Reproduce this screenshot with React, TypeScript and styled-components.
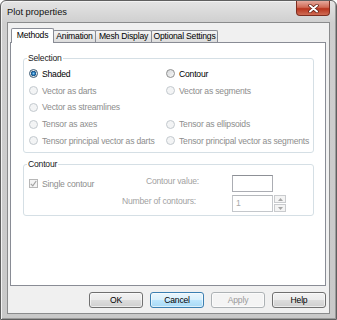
import styled, { createGlobalStyle } from 'styled-components';

const GlobalStyle = createGlobalStyle`
  html, body {
    margin: 0;
    padding: 0;
    background: #ffffff;
  }
  body {
    font-family: "Liberation Sans", Arial, sans-serif;
    font-size: 8.6px;
    letter-spacing: -0.2px;
  }
  * {
    box-sizing: border-box;
  }
`;

const Window = styled.div`
  width: 337px;
  height: 320px;
  display: flex;
  flex-direction: column;
  border: 1px solid #5f5f5f;
  border-radius: 6px 6px 0 0;
  background: linear-gradient(#e4e4e4, #cfcfcf 22px, #c9c9c9);
  box-shadow: inset 1px 1px 0 #f2f2f2, inset -1px -1px 0 #9a9a9a;
`;

const TitleBar = styled.div`
  height: 21px;
  display: flex;
  justify-content: space-between;
  align-items: center;
  padding: 0 6px 0 6px;
`;

const Title = styled.span`
  font-size: 9.3px;
  letter-spacing: 0;
  color: #111;
`;

const CloseButton = styled.div`
  align-self: flex-start;
  width: 34px;
  height: 15px;
  border: 1px solid #7d2d1f;
  border-top: none;
  border-radius: 0 0 4px 4px;
  background: linear-gradient(#e6a99d, #d06a55 45%, #b8341d 55%, #cf6d55);
  display: flex;
  align-items: center;
  justify-content: center;
`;

const Client = styled.div`
  flex: 1;
  margin: 0 6px 5px 6px;
  border: 1px solid #8a8b8c;
  background: #f0f0f0;
  padding: 5px 3px 5px 2px;
  display: flex;
  flex-direction: column;
`;

const TabStrip = styled.div`
  height: 14px;
  display: flex;
  align-items: flex-end;
  padding-left: 1px;
`;

const Tab = styled.div<{ $active?: boolean; $w: number }>`
  position: relative;
  z-index: ${p => (p.$active ? 2 : 1)};
  width: ${p => p.$w}px;
  height: ${p => (p.$active ? 15 : 12)}px;
  margin-bottom: ${p => (p.$active ? -1 : 0)}px;
  margin-left: -1px;
  border: 1px solid #898c95;
  border-bottom: none;
  border-radius: 2px 2px 0 0;
  background: ${p => (p.$active ? '#ffffff' : 'linear-gradient(#f4f4f4, #e9e9e9 50%, #dcdcdc)')};
  color: #000;
  display: flex;
  align-items: ${p => (p.$active ? 'flex-start' : 'center')};
  padding-top: ${p => (p.$active ? 1 : 0)}px;
  justify-content: center;
  line-height: 11px;
  white-space: nowrap;

  &:first-child {
    margin-left: 0;
  }
`;

const Panel = styled.div`
  flex: 1;
  background: #ffffff;
  border: 1px solid #898c95;
  padding: 9px 11px 0 12px;
`;

const Group = styled.fieldset<{ $mt?: number; $pr?: number }>`
  margin: ${p => p.$mt ?? 0}px 0 0 0;
  min-width: 0;
  border: 1px solid #d5dfe5;
  border-radius: 3px;
  padding: 1.5px ${p => p.$pr ?? 5}px 3px 5px;
`;

const Legend = styled.legend`
  padding: 0 1px;
  margin-left: -2px;
  line-height: 12px;
  color: #1a1a1a;
`;

const OptionGrid = styled.div`
  display: grid;
  grid-template-columns: 137px 1fr;
  grid-auto-rows: 16.75px;
`;

const Option = styled.label<{ $disabled?: boolean }>`
  display: flex;
  align-items: center;
  gap: 4px;
  white-space: nowrap;
  color: ${p => (p.$disabled ? '#8d8d8d' : '#000')};
`;

const Radio = styled.span<{ $checked?: boolean; $disabled?: boolean }>`
  flex: none;
  width: 9px;
  height: 9px;
  border-radius: 50%;
  border: 1px solid ${p => (p.$disabled ? '#c3c9ce' : p.$checked ? '#3d5a72' : '#8e8f8f')};
  background: ${p =>
    p.$checked
      ? 'radial-gradient(circle, #8fd0f5 0, #2a7dbd 1.4px, #1b4f7e 2.5px, #e6e9ec 3px)'
      : p.$disabled
      ? '#f3f4f5'
      : 'linear-gradient(135deg, #d6d8da, #f8f8f8)'};
`;

const ContourGrid = styled.div`
  display: grid;
  grid-template-columns: 1fr auto 41px 13px;
  grid-template-rows: 17px 17px;
  row-gap: 3px;
  padding-top: 3.5px;
`;

const Check = styled.span`
  flex: none;
  width: 9px;
  height: 9px;
  border: 1px solid #b7b7b7;
  background: #f4f4f4;
  display: flex;
  align-items: center;
  justify-content: center;
`;

const FieldLabel = styled.span<{ $pr: number }>`
  justify-self: end;
  align-self: start;
  padding-right: ${p => p.$pr}px;
  line-height: 13px;
  color: #a2a2a2;
  white-space: nowrap;
`;

const Input = styled.div<{ $disabled?: boolean }>`
  height: 17px;
  border: 1px solid ${p => (p.$disabled ? '#c4c7cb' : '#abadb3')};
  border-top-color: ${p => (p.$disabled ? '#b5b8bc' : '#8d9096')};
  background: #ffffff;
  color: #a9a9a9;
  padding-left: 3px;
  line-height: 15px;
`;

const Spinner = styled.div`
  margin-left: 1px;
  display: grid;
  grid-template-rows: 8px 8px;
  row-gap: 1px;
`;

const SpinButton = styled.div`
  border: 1px solid #c9cbce;
  background: #f4f4f4;
  display: flex;
  align-items: center;
  justify-content: center;
`;

const ButtonRow = styled.div`
  display: flex;
  justify-content: flex-end;
  gap: 7px;
  margin-top: 6px;
`;

const Button = styled.button<{ $variant?: 'default' | 'focused' | 'disabled' }>`
  width: 54px;
  height: 16px;
  padding: 0;
  margin: 0;
  font-family: inherit;
  font-size: 8.6px;
  letter-spacing: -0.2px;
  border-radius: 3px;
  border: 1px solid
    ${p => (p.$variant === 'focused' ? '#3c7fb1' : p.$variant === 'disabled' ? '#adb2b5' : '#707070')};
  color: ${p => (p.$variant === 'disabled' ? '#9a9a9a' : '#000')};
  background: ${p =>
    p.$variant === 'focused'
      ? 'linear-gradient(#eaf6fd, #d9f0fc 50%, #bee6fd 50%, #a7d9f5)'
      : p.$variant === 'disabled'
      ? '#f4f4f4'
      : 'linear-gradient(#f2f2f2, #ebebeb 50%, #dddddd 50%, #cfcfcf)'};
  box-shadow: inset 0 0 0 1px rgba(255, 255, 255, 0.6);
`;

const Arrow = ({ up }: { up?: boolean }) => (
  <svg width="5" height="3" viewBox="0 0 5 3">
    <path d={up ? 'M0 3 L2.5 0 L5 3 Z' : 'M0 0 L2.5 3 L5 0 Z'} fill="#a6a6a6" />
  </svg>
);

const selection: { label: string; checked?: boolean; disabled?: boolean }[] = [
  { label: 'Shaded', checked: true },
  { label: 'Contour' },
  { label: 'Vector as darts', disabled: true },
  { label: 'Vector as segments', disabled: true },
  { label: 'Vector as streamlines', disabled: true },
  { label: '' },
  { label: 'Tensor as axes', disabled: true },
  { label: 'Tensor as ellipsoids', disabled: true },
  { label: 'Tensor principal vector as darts', disabled: true },
  { label: 'Tensor principal vector as segments', disabled: true },
];

export default function App() {
  return (
    <>
      <GlobalStyle />
      <Window>
        <TitleBar>
          <Title>Plot properties</Title>
          <CloseButton>
            <svg width="11" height="9" viewBox="0 0 11 9">
              <path d="M2 1.5 L9 7.5 M9 1.5 L2 7.5" stroke="#5a1a10" strokeWidth="3.4" strokeLinecap="round" />
              <path d="M2 1.5 L9 7.5 M9 1.5 L2 7.5" stroke="#ffffff" strokeWidth="2" strokeLinecap="round" />
            </svg>
          </CloseButton>
        </TitleBar>
        <Client>
          <TabStrip>
            <Tab $active $w={43}>Methods</Tab>
            <Tab $w={43}>Animation</Tab>
            <Tab $w={57}>Mesh Display</Tab>
            <Tab $w={67}>Optional Settings</Tab>
          </TabStrip>
          <Panel>
            <Group>
              <Legend>Selection</Legend>
              <OptionGrid>
                {selection.map((o, i) =>
                  o.label ? (
                    <Option key={i} $disabled={o.disabled}>
                      <Radio $checked={o.checked} $disabled={o.disabled} />
                      {o.label}
                    </Option>
                  ) : (
                    <span key={i} />
                  )
                )}
              </OptionGrid>
            </Group>
            <Group $mt={5} $pr={27}>
              <Legend>Contour</Legend>
              <ContourGrid>
                <Option $disabled>
                  <Check>
                    <svg width="7" height="7" viewBox="0 0 7 7">
                      <path d="M0.8 3.8 L2.8 5.8 L6.2 1" stroke="#a4a4a4" strokeWidth="1.2" fill="none" />
                    </svg>
                  </Check>
                  Single contour
                </Option>
                <FieldLabel $pr={33}>Contour value:</FieldLabel>
                <Input />
                <span />
                <span />
                <FieldLabel $pr={36}>Number of contours:</FieldLabel>
                <Input $disabled>1</Input>
                <Spinner>
                  <SpinButton>
                    <Arrow up />
                  </SpinButton>
                  <SpinButton>
                    <Arrow />
                  </SpinButton>
                </Spinner>
              </ContourGrid>
            </Group>
          </Panel>
          <ButtonRow>
            <Button>OK</Button>
            <Button $variant="focused">Cancel</Button>
            <Button $variant="disabled">Apply</Button>
            <Button>Help</Button>
          </ButtonRow>
        </Client>
      </Window>
    </>
  );
}
